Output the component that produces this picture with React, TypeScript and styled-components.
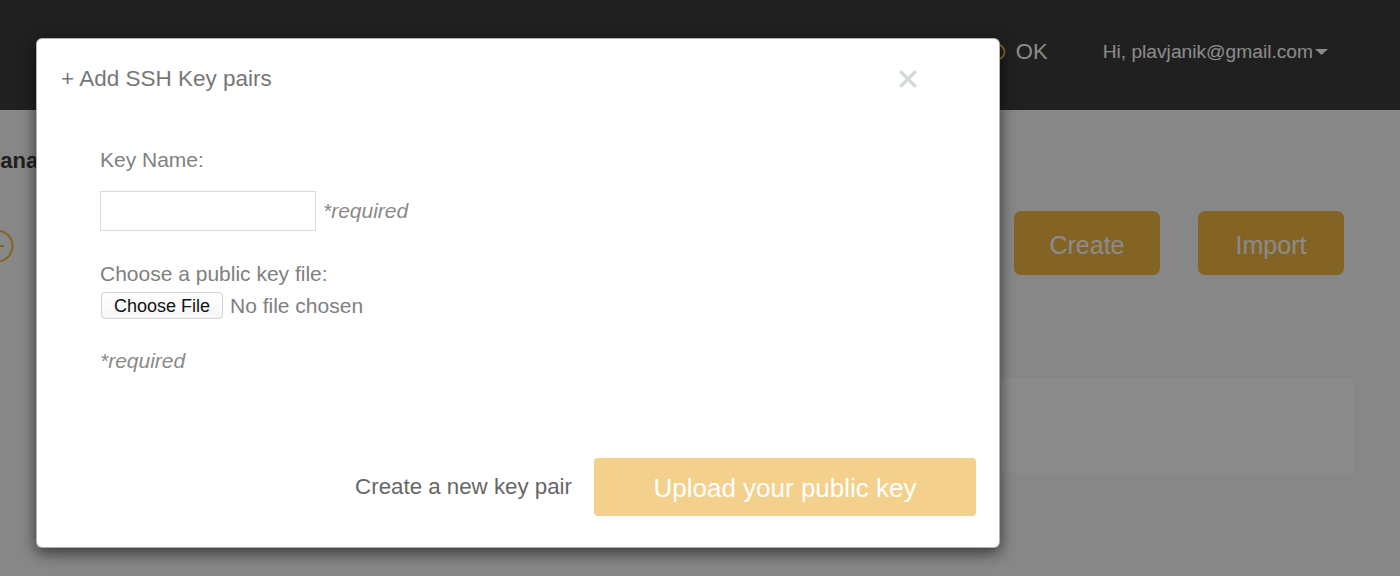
import React from "react";
import styled, { createGlobalStyle } from "styled-components";

const Global = createGlobalStyle`
  html, body { margin: 0; padding: 0; }
  body {
    width: 1400px;
    height: 576px;
    overflow: hidden;
    background: #f8f8f8;
    font-family: "Liberation Sans", Arial, sans-serif;
  }
  * { box-sizing: border-box; }
`;

const Page = styled.div`
  position: relative;
  width: 1400px;
  height: 576px;
  overflow: hidden;
  background: #f8f8f8;
`;

const TopBar = styled.header`
  height: 110px;
  background: #3b3b3b;
  display: flex;
  justify-content: flex-end;
  align-items: center;
  padding: 0 72px 6px 0;
  gap: 55px;
  color: #ffffff;
`;

const Status = styled.div`
  display: flex;
  align-items: center;
  gap: 10px;
  font-size: 22px;
`;

const User = styled.div`
  display: flex;
  align-items: center;
  gap: 2px;
  font-size: 19.2px;
`;

const Main = styled.main`
  display: flex;
  flex-direction: column;
  padding: 38px 47px 0 0;
`;

const PageTitle = styled.h1`
  margin: 0 0 0 -18px;
  font-size: 22px;
  line-height: 26px;
  font-weight: 700;
  color: #3a3a3a;
`;

const ActionRow = styled.div`
  display: flex;
  align-items: center;
  margin-top: 37px;
  padding-right: 9px;
`;

const BackIcon = styled.svg`
  margin-left: -20px;
  margin-top: 5px;
  flex: none;
`;

const Actions = styled.div`
  margin-left: auto;
  display: flex;
  gap: 38px;
`;

const GoldButton = styled.button`
  width: 146px;
  height: 64px;
  border: none;
  border-radius: 7px;
  background: #f2b742;
  color: #ffffff;
  font-family: inherit;
  font-size: 25px;
  padding: 5px 0 0;
`;

const Panel = styled.section`
  margin: 103px 0 0 40px;
  height: 95px;
  background: #ffffff;
`;

const Backdrop = styled.div`
  position: absolute;
  inset: 0;
  background: rgba(0, 0, 0, 0.455);
`;

const Modal = styled.div`
  position: absolute;
  left: 36px;
  top: 38px;
  width: 964px;
  height: 510px;
  background: #ffffff;
  border: 1px solid rgba(0, 0, 0, 0.3);
  border-radius: 6px;
  box-shadow: 0 5px 15px rgba(0, 0, 0, 0.6);
  display: flex;
  flex-direction: column;
`;

const ModalHeader = styled.div`
  height: 79px;
  display: flex;
  align-items: center;
  justify-content: space-between;
  padding: 0 82px 0 24px;
`;

const ModalTitle = styled.h2`
  margin: 0;
  font-size: 22.5px;
  font-weight: 400;
  color: #777777;
`;

const CloseButton = styled.button`
  border: none;
  background: none;
  padding: 0;
  width: 18px;
  height: 18px;
  display: flex;
`;

const ModalBody = styled.div`
  flex: 1;
  display: flex;
  flex-direction: column;
  align-items: flex-start;
  padding: 30px 0 0 63px;
`;

const Label = styled.div<{ $gap?: number }>`
  font-size: 21px;
  line-height: 24px;
  color: #808080;
  margin-top: ${(p) => p.$gap ?? 0}px;
`;

const FieldRow = styled.div<{ $gap: number }>`
  display: flex;
  align-items: center;
  gap: 7px;
  margin-top: ${(p) => p.$gap}px;
`;

const TextInput = styled.input`
  width: 216px;
  height: 40px;
  border: 1px solid #d6dcdc;
  border-radius: 0;
  outline: none;
  font-size: 18px;
`;

const Required = styled.span<{ $gap?: number }>`
  font-size: 21px;
  line-height: 24px;
  font-style: italic;
  color: #8a8a8a;
  margin-top: ${(p) => p.$gap ?? 0}px;
`;

const FileButton = styled.span`
  display: inline-flex;
  align-items: center;
  justify-content: center;
  width: 122px;
  height: 27px;
  padding-top: 2px;
  border: 1px solid #cfd3d3;
  border-radius: 4px;
  background: linear-gradient(#ffffff, #f6f6f6);
  font-size: 18px;
  color: #111111;
  margin-left: 1px;
`;

const FileStatus = styled.span`
  font-size: 21px;
  color: #808080;
`;

const ModalFooter = styled.div`
  display: flex;
  justify-content: flex-end;
  align-items: center;
  gap: 22px;
  padding: 0 23px 31px 0;
`;

const LinkText = styled.span`
  font-size: 22.3px;
  color: #666666;
`;

const UploadButton = styled.button`
  width: 382px;
  height: 58px;
  border: none;
  border-radius: 4px;
  background: #f3d08b;
  color: #ffffff;
  font-family: inherit;
  font-size: 26px;
  padding: 2px 0 0;
`;

export default function App() {
  return (
    <>
      <Global />
      <Page>
        <TopBar>
          <Status>
            <svg width="18" height="18" viewBox="0 0 18 18">
              <circle cx="9" cy="9" r="7.5" fill="none" stroke="#f2b742" strokeWidth="2" />
            </svg>
            <span>OK</span>
          </Status>
          <User>
            <span>Hi, plavjanik@gmail.com</span>
            <svg width="13" height="6" viewBox="0 0 13 6">
              <path d="M0 0 L13 0 L6.5 6 Z" fill="#ffffff" />
            </svg>
          </User>
        </TopBar>
        <Main>
          <PageTitle>Management</PageTitle>
          <ActionRow>
            <BackIcon width="34" height="34" viewBox="0 0 34 34">
              <circle cx="17" cy="17" r="15.5" fill="none" stroke="#f2b742" strokeWidth="2" />
              <path d="M10 17 H24 M17 10 V24" stroke="#f2b742" strokeWidth="2" />
            </BackIcon>
            <Actions>
              <GoldButton>Create</GoldButton>
              <GoldButton>Import</GoldButton>
            </Actions>
          </ActionRow>
          <Panel />
        </Main>
        <Backdrop />
        <Modal>
          <ModalHeader>
            <ModalTitle>+ Add SSH Key pairs</ModalTitle>
            <CloseButton aria-label="Close">
              <svg width="18" height="18" viewBox="0 0 18 18">
                <path d="M2.5 2.5 L15.5 15.5 M15.5 2.5 L2.5 15.5" stroke="#d3d9d9" strokeWidth="3.5" strokeLinecap="square" />
              </svg>
            </CloseButton>
          </ModalHeader>
          <ModalBody>
            <Label>Key Name:</Label>
            <FieldRow $gap={19}>
              <TextInput type="text" />
              <Required>*required</Required>
            </FieldRow>
            <Label $gap={31}>Choose a public key file:</Label>
            <FieldRow $gap={6}>
              <FileButton>Choose File</FileButton>
              <FileStatus>No file chosen</FileStatus>
            </FieldRow>
            <Required $gap={30}>*required</Required>
          </ModalBody>
          <ModalFooter>
            <LinkText>Create a new key pair</LinkText>
            <UploadButton>Upload your public key</UploadButton>
          </ModalFooter>
        </Modal>
      </Page>
    </>
  );
}
